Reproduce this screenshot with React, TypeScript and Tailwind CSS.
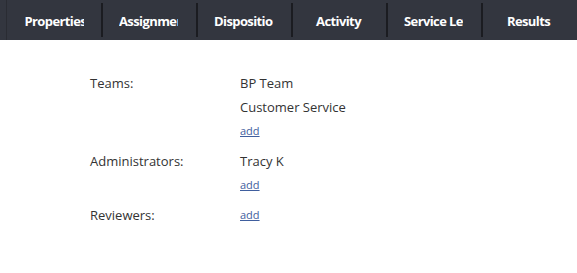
import React from "react";

export default function App() {
  const tabs = ["Properties", "Assignments", "Disposition", "Activity", "Service Level", "Results"];

  const rows = [
    { label: "Teams:", values: ["BP Team", "Customer Service"] },
    { label: "Administrators:", values: ["Tracy K"] },
    { label: "Reviewers:", values: [] as string[] },
  ];

  return (
    <div className="w-[577px] h-[273px] bg-white overflow-hidden font-['Open_Sans',sans-serif]">
      {/* tab strip */}
      <div className="flex h-10 bg-[#33363f] pl-[6px]">
        {tabs.map((t, i) => (
          <div
            key={t}
            className={
              "flex h-10 w-[95px] shrink-0 items-center justify-center " +
              (i === 0 ? "border-l border-[#2a2c33]" : "")
            }
          >
            {i > 0 && <div className="mr-auto h-[34px] w-[2px] bg-[#1b1c21]" />}
            <div className="w-[59px] overflow-hidden whitespace-nowrap pt-[2px] text-center text-[13px] font-bold leading-5 tracking-[-0.6px] text-white">
              {t}
            </div>
            {i > 0 && <div className="ml-auto w-[2px]" />}
          </div>
        ))}
      </div>

      {/* assignments */}
      <div className="flex flex-col gap-[6px] pl-[90px] pt-[31px] text-[13px] text-[#333]">
        {rows.map((r) => (
          <div key={r.label} className="flex">
            <div className="w-[150px] leading-6">{r.label}</div>
            <div className="flex flex-col">
              {r.values.map((v) => (
                <div key={v} className="leading-6">
                  {v}
                </div>
              ))}
              <a href="#" className="text-[11px] leading-6 text-[#3f5e9e] underline">
                add
              </a>
            </div>
          </div>
        ))}
      </div>
    </div>
  );
}
